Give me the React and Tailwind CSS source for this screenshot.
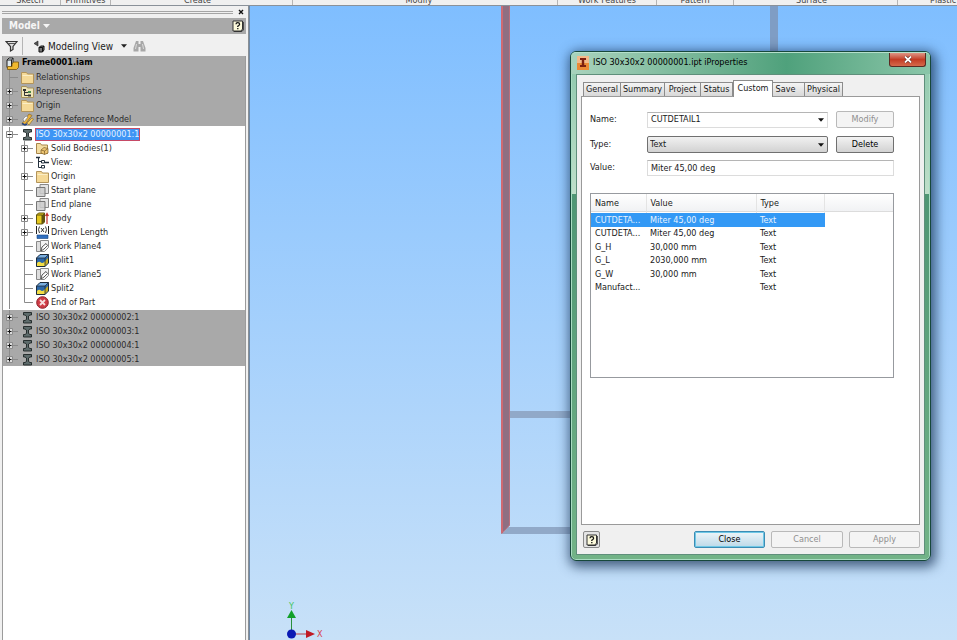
import React, { useState } from "react";

const FONT = "font-['DejaVu_Sans_Condensed','DejaVu_Sans',sans-serif]";

const RIBBON = [
  { label: "Sketch", width: "w-[61px] text-center" },
  { label: "Primitives", width: "w-[50px] text-center" },
  { label: "Create", width: "w-[182px] pr-2 text-center" },
  { label: "Modify", width: "w-[265px] pr-3 text-center" },
  { label: "Work Features", width: "w-[99px] text-center" },
  { label: "Pattern", width: "w-[77px] text-center" },
  { label: "Surface", width: "w-[164px] pr-2 text-center" },
  { label: "Plastic Part", width: "grow pl-8" },
];

const TOP_NODES = [
  { label: "Relationships", icon: "folder" },
  { label: "Representations", icon: "reps", box: "+" },
  { label: "Origin", icon: "folder", box: "+" },
  { label: "Frame Reference Model", icon: "frame", box: "+" },
];

const PART_NODES = [
  { label: "Solid Bodies(1)", icon: "solid", box: "+" },
  { label: "View:", icon: "view" },
  { label: "Origin", icon: "folder", box: "+" },
  { label: "Start plane", icon: "plane" },
  { label: "End plane", icon: "plane" },
  { label: "Body", icon: "body", box: "+" },
  { label: "Driven Length", icon: "length", box: "+" },
  { label: "Work Plane4", icon: "workplane" },
  { label: "Split1", icon: "split" },
  { label: "Work Plane5", icon: "workplane" },
  { label: "Split2", icon: "split" },
  { label: "End of Part", icon: "end", last: true },
];

const OTHER_PARTS = [
  "ISO 30x30x2 00000002:1",
  "ISO 30x30x2 00000003:1",
  "ISO 30x30x2 00000004:1",
  "ISO 30x30x2 00000005:1",
];

const TABS = [
  { label: "General", width: "w-[38px]" },
  { label: "Summary", width: "w-[44px]" },
  { label: "Project", width: "w-[36px]" },
  { label: "Status", width: "w-[32px]" },
  { label: "Custom", width: "w-[40px]" },
  { label: "Save", width: "w-[32px] pr-[6px]" },
  { label: "Physical", width: "w-[38px]" },
];

const PROPS = [
  ["CUTDETA...", "Miter 45,00 deg", "Text"],
  ["CUTDETA...", "Miter 45,00 deg", "Text"],
  ["G_H", "30,000 mm", "Text"],
  ["G_L", "2030,000 mm", "Text"],
  ["G_W", "30,000 mm", "Text"],
  ["Manufact...", "", "Text"],
];

const ICONS = {
  folder: (
    <>
      <path d="M.5 1.500h5l1 1.500h6v9.500H.5z" fill="#f5d997" stroke="#b3945a" />
      <path d="M1.500 4.500h10" stroke="#fbeec6" />
    </>
  ),
  reps: (
    <>
      <path d="M.5 1.500h5l1 1.500h6v9.500H.5z" fill="#f0e6b8" stroke="#a8935a" />
      <path d="M3.500 5v5.500H7M3.500 7.500H7" stroke="#333" fill="none" />
      <path d="M2 4h3v2H2zM7 9.500h3v2H7z" fill="#333" />
      <path d="M7 6h3v2H7z" fill="#4b8c4b" />
    </>
  ),
  frame: (
    <>
      <path d="M1 10.500 8 1l3 1.500-7 9z" fill="#e9b13c" stroke="#8a6420" strokeWidth=".7" />
      <path d="m2 6 3-3 2 1-4 5z" fill="#f4f4f4" stroke="#777" strokeWidth=".6" />
      <path d="m6 10 5-5 1.500 1L8 12z" fill="#f6cf68" stroke="#8a6420" strokeWidth=".6" />
      <path d="M1 10.500 4 12l2-1" stroke="#27457f" strokeWidth="1.500" fill="none" />
    </>
  ),
  beam: (
    <path d="M2.500 1.500h8v2.500H9L7.500 5v3.500L9 9.500h1.500V12h-8V9.500H4l1.500-1V5L4 4H2.500z" fill="#5d6b6b" stroke="#1d2525" strokeWidth=".9" />
  ),
  solid: (
    <>
      <path d="M.5 1.500h4l1 1.500h6v8.500H.5z" fill="#f3dca0" stroke="#a8854a" />
      <path d="m5 8 3-2.500 4 1V11l-3.500 1.500L5 11z" fill="#efc774" stroke="#7a5b28" strokeWidth=".7" />
      <path d="m5 8 3.500 1v3.500M8.500 9 12 6.500" fill="none" stroke="#7a5b28" strokeWidth=".7" />
    </>
  ),
  view: (
    <>
      <path d="M0 1.500h4" stroke="#222f3c" strokeWidth="1.500" />
      <path d="M2.500 2v9.500H5M2.500 5.500H5M5.500 4.500h3v2.500h-3zM5.500 9.500h3V12h-3z" fill="none" stroke="#222f3c" />
      <path d="M9 6.500h4" stroke="#222f3c" strokeWidth="1.500" />
    </>
  ),
  plane: (
    <>
      <path d="M4 .5h8.500v9H4z" fill="#e4e4e4" stroke="#888" />
      <path d="M.5 3.500H9v9H.5z" fill="#cdcdcd" fillOpacity=".85" stroke="#777" />
    </>
  ),
  body: (
    <>
      <path d="m.5 3 2-2h6v9l-2 2h-6z" fill="#e6c81e" stroke="#5f5310" />
      <path d="M.5 3h5.500v9" fill="none" stroke="#5f5310" />
      <path d="m6 3 2.500-2v9L6 12z" fill="#5f5310" />
      <path d="M11 12V2M9.500 4 11 1.500 12.500 4" fill="none" stroke="#c4302b" strokeWidth="1.200" />
    </>
  ),
  length: (
    <>
      <path d="M.5 0v8M12.500 0v8" stroke="#222" />
      <path d="M3.500.5Q1.500 3.500 3.500 7M9.500.5q2 3 0 6.500M5 2l3 4M8 2 5 6" fill="none" stroke="#222" strokeWidth=".9" />
      <path d="M1 9h11v3.500H1z" fill="#2f6fc0" stroke="#16457f" strokeWidth=".6" />
    </>
  ),
  workplane: (
    <>
      <path d="M.5 1.500h5v10h-5z" fill="#dedede" stroke="#888" />
      <path d="M4.500.5h8v7l-4 4h-4z" fill="#f2f2f2" stroke="#888" />
      <path d="m5 11 1-4 4-3.500 1.500 2L8 9z" fill="#fff" stroke="#444" strokeWidth=".9" />
    </>
  ),
  split: (
    <>
      <path d="m.5 4 3.500-3.500h8.500V9L9 12.500H.5z" fill="#2c67a8" stroke="#1d2b3a" />
      <path d="m1 4 3.500-3h8L9 4z" fill="#79aee0" />
      <path d="M1 9q2-2 4-.5T9 7v5H1z" fill="#f3dd45" />
      <path d="m9 7 3-3v5l-3 3z" fill="#c9ad22" />
      <path d="M.5 4H9v8.500M9 4l3.500-3.500" fill="none" stroke="#1d2b3a" strokeWidth=".8" />
    </>
  ),
  end: (
    <>
      <circle cx="6.500" cy="6.500" r="5.800" fill="#cf3c46" stroke="#8d2029" />
      <path d="m4 4 5 5M9 4 4 9" stroke="#f8dede" strokeWidth="1.800" />
    </>
  ),
};

const Icon = ({ name }) => (
  <svg viewBox="0 0 13 13" className="w-[13px] h-[13px] shrink-0" aria-hidden="true">
    {ICONS[name]}
  </svg>
);

const HelpMark = () => (
  <svg viewBox="0 0 12 12" className="w-3 h-3" aria-hidden="true">
    <path d="M1 1h9.500v8L9 11H1z" fill="#fdfbdc" stroke="#333" />
    <path d="M11.300 2v8l-1.500 1.500H2" fill="none" stroke="#333" />
    <path d="M4 4.200Q4 2.700 5.800 2.700t1.800 1.500q0 1-1.800 2v.8M5.800 8v1.300" fill="none" stroke="#111" strokeWidth="1.300" />
  </svg>
);

// connector lines plus the +/- box in front of a tree item
const Branch = ({ box, last }) => (
  <svg viewBox="0 0 15 14" className="w-[15px] h-[14px] shrink-0" aria-hidden="true">
    <path d={last ? "M5.500 0v7.500H14" : "M5.500 0v14M5.500 7.500H14"} fill="none" stroke="#8b8b8b" />
    {box ? (
      <>
        <path d="M2.500 4.500h6v6h-6z" fill="#fff" fillOpacity=".6" stroke="#8b8b8b" />
        <path d={box === "+" ? "M3.500 7.500h4M5.500 5.500v4" : "M3.500 7.500h4"} stroke="#111" />
      </>
    ) : null}
  </svg>
);

const TreeItem = ({ icon, label, box, last, selected, indent }) => (
  <li className="flex items-center h-[14px] pl-px">
    {indent ? (
      <svg viewBox="0 0 15 14" className="w-[15px] h-[14px] shrink-0" aria-hidden="true">
        <path d="M5.500 0v14" stroke="#8b8b8b" />
      </svg>
    ) : null}
    <Branch box={box} last={last} />
    <span className="flex w-4 justify-center">
      <Icon name={icon} />
    </span>
    <span
      className={
        selected
          ? "ml-px leading-[11px] bg-[#3d95f5] text-[#e3f1ff] outline outline-[#c64a66]"
          : "ml-px leading-3"
      }
    >
      {label}
    </span>
  </li>
);

const ModelBrowser = () => (
  <aside className="flex flex-col w-[249px] shrink-0 bg-[#f0f0f0] border-r border-[#8a8f94] pl-[2px] pr-[2px]">
    <div className="flex items-center h-3 gap-1 pr-px">
      <div className="grow h-[3px] border-y border-[#a5a5a5]"></div>
      <button aria-label="Close panel" className="w-2 h-2 flex items-center justify-center">
        <svg viewBox="0 0 6 6" className="w-[6px] h-[6px]" aria-hidden="true">
          <path d="m1 1 4 4M5 1 1 5" stroke="#111" strokeWidth="1.400" />
        </svg>
      </button>
    </div>
    <div className="flex items-center justify-between h-4 bg-[#a9a9a9] pl-[7px] pr-[2px]">
      <button className="flex items-center gap-[3px] text-[10px] leading-3 font-bold text-[#f6f6f6]">
        Model
        <svg viewBox="0 0 7 4" className="w-[7px] h-1" aria-hidden="true">
          <path d="M0 0h7L3.500 4z" fill="#f6f6f6" />
        </svg>
      </button>
      <button aria-label="Help">
        <HelpMark />
      </button>
    </div>
    <div className="flex items-center h-[22px] pt-[2px]">
      <button aria-label="Filter" className="w-[21px] h-[18px] pl-[3px] border-r border-[#b5b5b5]">
        <svg viewBox="0 0 13 12" className="w-[13px] h-3" aria-hidden="true">
          <path d="M1 1.500h11L8 6.500v3L5.500 11V6.500z" fill="#ddd" stroke="#333" strokeWidth="1.200" />
          <path d="M3 3.500h7" stroke="#555" />
        </svg>
      </button>
      <button className="flex items-center ml-[10px] text-[10px] text-[#222]">
        <svg viewBox="0 0 13 13" className="w-[13px] h-[13px] mr-[2px]" aria-hidden="true">
          <path d="M1 3.500 5 1v5z" fill="#555" stroke="#222" strokeWidth=".6" />
          <path d="m6 7.500 1.500-1.500H11v4l-1.500 2H6z" fill="#777" stroke="#111" />
          <path d="M6 7.500h3.500V12M9.500 7.500 11 6" fill="none" stroke="#111" />
        </svg>
        Modeling View
        <svg viewBox="0 0 7 4" className="w-[6px] h-1 ml-2" aria-hidden="true">
          <path d="M0 0h7L3.500 4z" fill="#222" />
        </svg>
      </button>
      <button aria-label="Find" className="ml-[6px]">
        <svg viewBox="0 0 13 12" className="w-[13px] h-3" aria-hidden="true">
          <path d="M3 1h2.500v3h2V1H10l2.500 7v3.500h-5V7h-2v4.500h-5V8z" fill="#a8a8a8" />
          <path d="M3.500 4 2.500 9M9.500 4l1 5" stroke="#dcdcdc" />
        </svg>
      </button>
    </div>
    <div className="grow bg-white border-x border-[#9b9b9b] text-[9px] text-[#2b2b2b] whitespace-nowrap">
      <ul className="bg-[#a9a9a9]">
        <li className="flex items-center h-[14px] pl-[3px] gap-[3px] text-[9px] font-bold text-black">
          <svg viewBox="0 0 13 13" className="w-[13px] h-[13px]" aria-hidden="true">
            <path d="m1 3 2-2h4v8l-1.500 1.500H1z" fill="#dfe9ee" stroke="#222" />
            <path d="M1 3h4.500v7M5.500 3 7 1" fill="none" stroke="#222" />
            <path d="m6 7 1.500-2h5v5.500l-2 2H1.500v-3H6z" fill="#f0b92e" stroke="#76540c" strokeWidth=".8" />
          </svg>
          Frame0001.iam
        </li>
        {TOP_NODES.map((v) => (
          <TreeItem key={v.label} {...v} />
        ))}
      </ul>
      <ul className="py-px">
        <TreeItem icon="beam" label="ISO 30x30x2 00000001:1" box="-" selected />
        {PART_NODES.map((v, i) => (
          <TreeItem key={i} {...v} indent />
        ))}
      </ul>
      <ul className="bg-[#a9a9a9]">
        {OTHER_PARTS.map((v, i) => (
          <TreeItem key={v} icon="beam" label={v} box="+" last={i === OTHER_PARTS.length - 1} />
        ))}
      </ul>
    </div>
  </aside>
);

const FrameDrawing = () => (
  <svg className="absolute inset-0 w-full h-full" aria-hidden="true">
    <path d="M520 0h8v300h-8z" fill="#7f9dc4" />
    <path d="M260 405h200v7H260zM258 521h200v7H252z" fill="#91a9c8" />
    <path d="M251 0h9v519l-9 9z" fill="#8f6f82" />
    <path d="M252 0v527" stroke="#cf6a72" strokeWidth="2" />
    <path d="M259.500 0v519l-8 9" fill="none" stroke="#b8707d" />
  </svg>
);

const AxisTriad = () => (
  <svg viewBox="0 0 44 42" className="absolute left-[34px] bottom-0 w-[44px] h-[42px]" aria-hidden="true">
    <path d="M7.500 36V16" stroke="#2a8f3c" />
    <path d="M7.500 12 12 20H3z" fill="#12a02a" />
    <path d="M8 36h18" stroke="#b43a44" />
    <path d="M22 32l9 4-9 4z" fill="#c01a24" />
    <circle cx="7.500" cy="36" r="4.500" fill="#0a1ab4" />
    <text x="5" y="11" className="text-[9px] fill-[#3fc45c]">Y</text>
    <text x="33" y="39" className="text-[9px] fill-[#d8404c]">X</text>
  </svg>
);

const FormButton = ({ children, disabled, primary, className }) => (
  <button
    disabled={disabled}
    className={`h-[17px] border rounded-[2px] text-center ${
      primary
        ? "border-[#3c8cb4] bg-linear-to-b from-[#eef5f9] to-[#bcd9e8] ring-1 ring-inset ring-[#6fc8e6] text-black"
        : disabled
          ? "border-[#b9b9b9] bg-[#f4f4f4] text-[#8f8f8f]"
          : "border-[#707070] bg-linear-to-b from-[#f3f3f3] to-[#d2d2d2] text-black"
    } ${className}`}
  >
    {children}
  </button>
);

const IPropertiesDialog = () => {
  const [tab, setTab] = useState("Custom");
  const [row, setRow] = useState(0);

  return (
    <section
      aria-label="iProperties"
      className="absolute top-[45px] right-[26px] w-[361px] rounded-[6px] border border-[#17483b] bg-linear-to-b from-[#8cc7ab] from-0% via-[#bfdfca] via-28% to-[#6fb087] p-[5px] pt-0 text-[9px] text-[#1a1a1a] shadow-[2px_3px_12px_3px_rgba(20,45,80,0.7)] ring-1 ring-inset ring-[#a9dcc2]"
    >
      {/* darker lower part of the glass border */}
      <div className="absolute inset-x-px top-[142px] bottom-px rounded-b-[5px] bg-linear-to-b from-[#4f9674] to-[#72b387]"></div>

      <header className="relative flex items-start justify-between h-[22px] -mx-[5px] pl-[6px] pr-[4px] rounded-t-[5px] border-t border-[#b5e0cb] bg-linear-to-r from-[#a9d3bd] via-[#4fa17c] via-60% to-[#8ac6a9]">
        <div className="flex items-center gap-[4px] h-5 text-black">
          <svg viewBox="0 0 12 14" className="w-3 h-[14px]" aria-hidden="true">
            <path d="M0 0h12v14H0z" fill="#f3b98a" />
            <path d="M0 7h12v7H0z" fill="#ec8a35" />
            <path d="M3 2h6v2H7.200v5H9v2H3V9h1.800V4H3z" fill="#7d1f10" />
          </svg>
          <h2>ISO 30x30x2 00000001.ipt iProperties</h2>
        </div>
        <button
          aria-label="Close"
          className="flex items-center justify-center w-[37px] h-[14px] rounded-b-[3px] border border-t-0 border-[#5b2a22] bg-linear-to-b from-[#dd9485] via-[#c33c24] to-[#d5694b]"
        >
          <svg viewBox="0 0 8 7" className="w-2 h-[7px]" aria-hidden="true">
            <path d="m1 .5 6 6M7 .5l-6 6" stroke="#5a2018" strokeWidth="3" />
            <path d="m1 .5 6 6M7 .5l-6 6" stroke="#fff" strokeWidth="1.800" />
          </svg>
        </button>
      </header>

      <div className="relative bg-[#f0f0f0] border border-[#5f8f7b] px-[4px] pt-[5px] pb-[6px]">
        <div role="tablist" className="flex items-end h-4 pl-[2px]">
          {TABS.map((v) => (
            <button
              key={v.label}
              role="tab"
              aria-selected={tab === v.label}
              onClick={() => setTab(v.label)}
              className={`${v.width} ${
                tab === v.label
                  ? "h-[17px] -mb-px relative bg-white border border-b-0 border-[#8c8c8c]"
                  : "h-[14px] bg-linear-to-b from-[#f4f4f4] to-[#d8d8d8] border border-l-0 border-b-0 border-[#8c8c8c] first:border-l"
              } flex items-center justify-center whitespace-nowrap`}
            >
              {v.label}
            </button>
          ))}
        </div>

        <div className="bg-white border border-[#9a9a9a] pt-[14px] px-[8px] h-[429px]">
          <div className="grid grid-cols-[57px_181px_66px] gap-y-[8px] items-center">
            <label htmlFor="prop-name">Name:</label>
            <div className="flex items-center h-4 border border-[#dcdcdc] border-t-[#b5b5b5]">
              <input id="prop-name" defaultValue="CUTDETAIL1" className="grow min-w-0 pl-[3px] outline-none" />
              <button aria-label="Show names" className="w-3 flex justify-center">
                <svg viewBox="0 0 7 4" className="w-[6px] h-1" aria-hidden="true">
                  <path d="M0 0h7L3.500 4z" fill="#111" />
                </svg>
              </button>
            </div>
            <FormButton disabled className="ml-2">Modify</FormButton>

            <label htmlFor="prop-type">Type:</label>
            <div className="relative">
              <select
                id="prop-type"
                className="appearance-none block w-full h-[17px] pl-[2px] border border-[#707070] rounded-[2px] bg-linear-to-b from-[#f1f1f1] to-[#d2d2d2]"
              >
                <option>Text</option>
                <option>Date</option>
                <option>Number</option>
                <option>Yes or no</option>
              </select>
              <svg viewBox="0 0 7 4" className="absolute right-[4px] top-[7px] w-[6px] h-1 pointer-events-none" aria-hidden="true">
                <path d="M0 0h7L3.500 4z" fill="#111" />
              </svg>
            </div>
            <FormButton className="ml-2">Delete</FormButton>
          </div>
          <div className="flex items-center mt-[7px]">
            <label htmlFor="prop-value" className="w-[57px]">Value:</label>
            <input
              id="prop-value"
              defaultValue="Miter 45,00 deg"
              className="w-[247px] h-4 pl-[3px] border border-[#dcdcdc] border-t-[#b5b5b5] outline-none"
            />
          </div>

          <div className="w-[304px] h-[185px] mt-[17px] border border-[#979a9f] bg-white">
            <div className="h-[18px] bg-linear-to-b from-white to-[#f1f2f4] border-b border-[#dcdcdc]">
              <table className="w-[234px] h-[100px] table-fixed text-left whitespace-nowrap">
                <thead>
                  <tr className="h-[19px]">
                    <th className="w-[55px] pl-1 font-normal border-r border-[#e4e4e4]">Name</th>
                    <th className="w-[110px] pl-1 font-normal border-r border-[#e4e4e4]">Value</th>
                    <th className="pl-1 font-normal border-r border-[#e4e4e4]">Type</th>
                  </tr>
                </thead>
                <tbody>
                  {PROPS.map((cells, i) => (
                    <tr
                      key={i}
                      onClick={() => setRow(i)}
                      className={row === i ? "bg-[#3399f5] text-[#e8f3ff]" : ""}
                    >
                      {cells.map((v, j) => (
                        <td key={j} className="pl-1 leading-3">
                          {v}
                        </td>
                      ))}
                    </tr>
                  ))}
                </tbody>
              </table>
            </div>
          </div>
        </div>

        <footer className="flex items-center gap-[6px] pt-[6px] pl-[2px]">
          <button
            aria-label="Help"
            className="flex items-center justify-center w-[17px] h-[17px] mr-auto rounded-[2px] border border-[#8a8a8a] bg-[#e4e4e4]"
          >
            <HelpMark />
          </button>
          <FormButton primary className="w-[71px]">Close</FormButton>
          <FormButton disabled className="w-[72px]">Cancel</FormButton>
          <FormButton disabled className="w-[71px]">Apply</FormButton>
        </footer>
      </div>
    </section>
  );
};

const App = () => {
  return (
    <div className={`flex flex-col h-screen overflow-hidden bg-[#f0f0f0] ${FONT}`}>
      <nav className="flex items-end h-[6px] shrink-0 overflow-hidden border-b border-[#8a9199] text-[9px] leading-[10px] text-[#444]">
        {RIBBON.map((v) => (
          <div key={v.label} className={`${v.width} shrink-0 whitespace-nowrap border-r border-[#b5b5b5] last:border-r-0`}>
            {v.label}
          </div>
        ))}
      </nav>
      <div className="flex grow min-h-0">
        <ModelBrowser />
        <main className="relative grow overflow-hidden border-l border-[#6d89a8] bg-linear-to-b from-[#7fbeff] to-[#c8e1f8]">
          <FrameDrawing />
          <AxisTriad />
          <IPropertiesDialog />
        </main>
      </div>
    </div>
  );
};
export default App;
